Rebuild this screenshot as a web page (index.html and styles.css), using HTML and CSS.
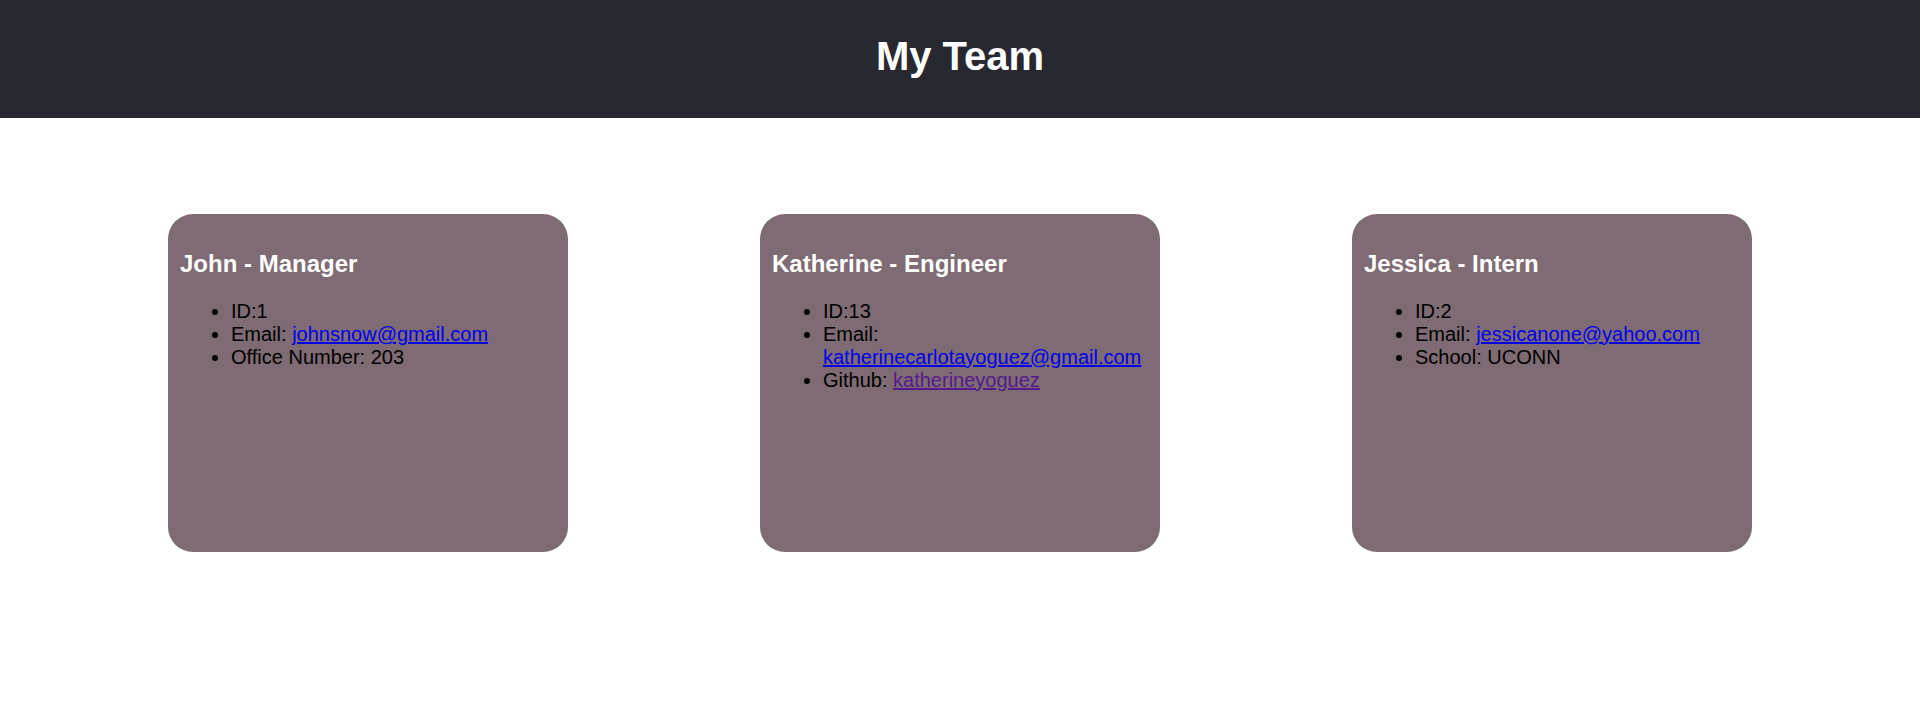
FILE: index.html
```html
<!DOCTYPE html>
<html lang="en">
<head>
<meta charset="UTF-8">
<title>My Team</title>
<link rel="stylesheet" href="styles.css">
</head>
<body>
<header class="top-bar">
  <h1 class="title">My Team</h1>
</header>
<main class="team">
  <section class="card">
    <h2 class="card-title">John - Manager</h2>
    <ul class="info">
      <li>ID:1</li>
      <li>Email: <a class="link" href="#">johnsnow@gmail.com</a></li>
      <li>Office Number: 203</li>
    </ul>
  </section>
  <section class="card">
    <h2 class="card-title">Katherine - Engineer</h2>
    <ul class="info">
      <li>ID:13</li>
      <li>Email: <a class="link" href="#">katherinecarlotayoguez@gmail.com</a></li>
      <li>Github: <a class="link visited" href="#">katherineyoguez</a></li>
    </ul>
  </section>
  <section class="card">
    <h2 class="card-title">Jessica - Intern</h2>
    <ul class="info">
      <li>ID:2</li>
      <li>Email: <a class="link" href="#">jessicanone@yahoo.com</a></li>
      <li>School: UCONN</li>
    </ul>
  </section>
</main>
</body>
</html>
```

FILE: styles.css
```css
html, body {
  margin: 0;
  padding: 0;
  background: #ffffff;
  font-family: "Liberation Sans", Arial, sans-serif;
}

.top-bar {
  background: #282831;
  height: 118px;
  box-sizing: border-box;
  padding-top: 33px;
}

.title {
  margin: 0;
  text-align: center;
  color: #ffffff;
  font-size: 40px;
  font-weight: bold;
  line-height: 46px;
}

.team {
  display: flex;
  justify-content: center;
  gap: 192px;
  padding-top: 96px;
}

.card {
  width: 400px;
  height: 338px;
  box-sizing: border-box;
  background: #7f6b73;
  border-radius: 25px;
  padding: 15px 12px 0 12px;
}

.card-title {
  margin: 21px 0 22px 0;
  color: #ffffff;
  font-size: 24px;
  font-weight: bold;
}

.info {
  margin: 0;
  padding-left: 51px;
  font-size: 20px;
  line-height: 23px;
  color: #000000;
}

.link {
  color: #0000ee;
  text-decoration: underline;
}

.link.visited {
  color: #551a8b;
}
```
